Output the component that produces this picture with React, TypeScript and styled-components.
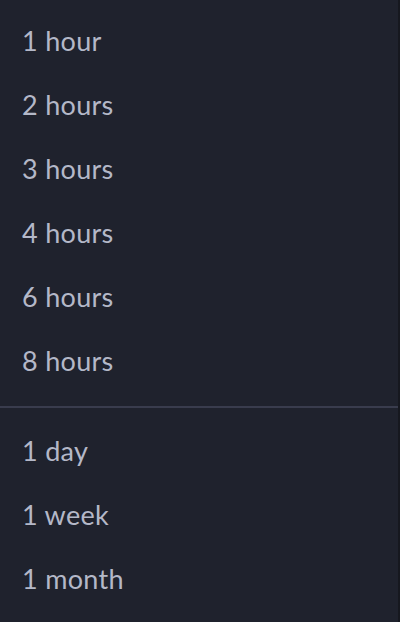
import React from "react";
import styled, { createGlobalStyle } from "styled-components";

const Global = createGlobalStyle`
    html, body {
        margin: 0;
        padding: 0;
        background: #16181f;
    }
`;

const Menu = styled.div`
    width: 398px;
    height: 622px;
    box-sizing: border-box;
    padding: 8px 0 12px;
    background-color: #1f222d;
    font-family: Lato, "Noto Sans", sans-serif;
`;

const Group = styled.ul`
    list-style: none;
    margin: 0;
    padding: 0;
`;

const Item = styled.li`
    display: flex;
    align-items: center;
    height: 64px;
    padding: 0 22px;
    font-size: 27px;
    letter-spacing: 0.3px;
    color: #b4b8c8;
    cursor: pointer;
`;

const Divider = styled.hr`
    border: 0;
    margin: 14px 0 10px;
    height: 2px;
    background-color: #393c4d;
`;

const short = ["1 hour", "2 hours", "3 hours", "4 hours", "6 hours", "8 hours"];
const long = ["1 day", "1 week", "1 month"];

export default function App() {
    return (
        <>
            <Global />
            <Menu>
                <Group>
                    {short.map((label) => <Item key={label}>{label}</Item>)}
                </Group>
                <Divider />
                <Group>
                    {long.map((label) => <Item key={label}>{label}</Item>)}
                </Group>
            </Menu>
        </>
    );
}
